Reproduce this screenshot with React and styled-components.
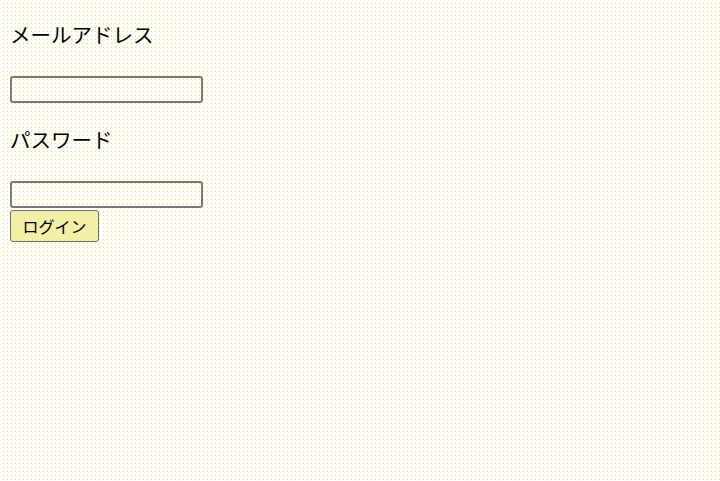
import React from "react";
import styled, { createGlobalStyle } from "styled-components";

const Global = createGlobalStyle`
  html, body {
    margin: 0;
    padding: 0;
    height: 100%;
  }
  body {
    background-color: #ffffff;
    background-image:
      linear-gradient(to right, #ffffff 3px, transparent 3px),
      linear-gradient(to bottom, #ffffff 3px, transparent 3px),
      linear-gradient(#f7e81c, #f7e81c);
    background-size: 4px 4px, 4px 4px, 4px 4px;
    background-position: 0 0, 0 0, 0 0;
    font-family: "Noto Sans CJK JP", "Noto Sans", sans-serif;
    color: #000;
  }
`;

const Page = styled.div`
  padding: 19px 10px 0;
  min-height: 481px;
  box-sizing: border-box;
`;

const Form = styled.form`
  display: flex;
  flex-direction: column;
  align-items: flex-start;
`;

const Label = styled.label`
  display: block;
  font-size: 20.5px;
  line-height: 30px;
  height: 30px;
  margin: ${(p) => (p.$first ? "0" : "21px")} 0 27px;
`;

const Input = styled.input`
  box-sizing: border-box;
  width: 193px;
  height: 27px;
  margin: 0;
  padding: 1px 2px;
  border: 2px solid #7a7a7a;
  border-radius: 3px;
  background: transparent;
  font-family: "Noto Sans CJK JP", sans-serif;
  font-size: 13px;
`;

const Button = styled.button`
  box-sizing: border-box;
  margin-top: 2px;
  height: 32px;
  padding: 0 11.5px;
  border: 1px solid #6f6f6f;
  border-radius: 3px;
  background: #f3efa6;
  font-family: "Noto Sans CJK JP", sans-serif;
  font-size: 16px;
  line-height: 1;
  color: #000;
`;

export default function App() {
  return (
    <>
      <Global />
      <Page>
        <Form onSubmit={(e) => e.preventDefault()}>
          <Label $first htmlFor="email">メールアドレス</Label>
          <Input id="email" type="email" />
          <Label htmlFor="password">パスワード</Label>
          <Input id="password" type="password" />
          <Button type="submit">ログイン</Button>
        </Form>
      </Page>
    </>
  );
}
